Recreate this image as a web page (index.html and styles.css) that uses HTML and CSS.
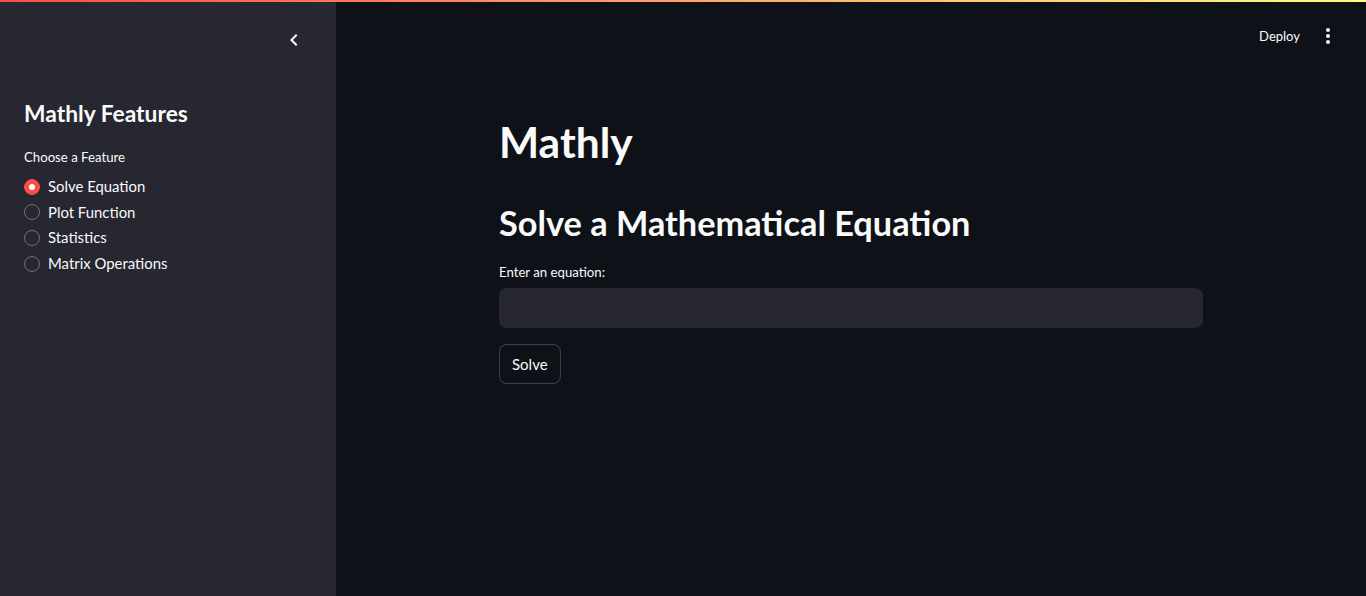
FILE: index.html
```html
<!DOCTYPE html>
<html lang="en">
<head>
<meta charset="utf-8">
<title>Mathly</title>
<link rel="stylesheet" href="styles.css">
</head>
<body>
<div class="decoration"></div>
<div class="app">
  <aside class="sidebar">
    <div class="sidebar-top">
      <button class="icon-btn" aria-label="Collapse sidebar">
        <svg width="24" height="24" viewBox="0 0 24 24"><path d="M15.41 7.41L14 6l-6 6 6 6 1.41-1.41L10.83 12z" fill="#fafafa"/></svg>
      </button>
    </div>
    <h2 class="side-title">Mathly Features</h2>
    <div class="radio-label">Choose a Feature</div>
    <div class="radio-group">
      <label class="radio checked"><span class="dot"></span><span>Solve Equation</span></label>
      <label class="radio"><span class="dot"></span><span>Plot Function</span></label>
      <label class="radio"><span class="dot"></span><span>Statistics</span></label>
      <label class="radio"><span class="dot"></span><span>Matrix Operations</span></label>
    </div>
  </aside>
  <main class="main">
    <header class="header">
      <span class="deploy">Deploy</span>
      <button class="icon-btn" aria-label="Menu">
        <svg width="24" height="24" viewBox="0 0 24 24"><path d="M12 8c1.1 0 2-.9 2-2s-.9-2-2-2-2 .9-2 2 .9 2 2 2zm0 2c-1.1 0-2 .9-2 2s.9 2 2 2 2-.9 2-2-.9-2-2-2zm0 6c-1.1 0-2 .9-2 2s.9 2 2 2 2-.9 2-2-.9-2-2-2z" fill="#fafafa"/></svg>
      </button>
    </header>
    <section class="block">
      <h1 class="title">Mathly</h1>
      <h2 class="subtitle">Solve a Mathematical Equation</h2>
      <label class="field-label">Enter an equation:</label>
      <div class="input"></div>
      <button class="btn">Solve</button>
    </section>
  </main>
</div>
</body>
</html>
```

FILE: styles.css
```css
* { box-sizing: border-box; }
html, body { margin: 0; padding: 0; }
body {
  background: #0e1117;
  color: #fafafa;
  font-family: "Lato", "Noto Sans", sans-serif;
  height: 596px;
  overflow: hidden;
}
.decoration {
  height: 2px;
  background: linear-gradient(90deg, #ff4b4b, #fffd80);
}
.app {
  display: flex;
  height: 594px;
}
.sidebar {
  width: 336px;
  flex: 0 0 336px;
  background: #262730;
  padding: 0 24px;
}
.sidebar-top {
  display: flex;
  justify-content: flex-end;
  padding-top: 26px;
  padding-right: 6px;
}
.icon-btn {
  border: 0;
  background: none;
  padding: 0;
  width: 24px;
  height: 24px;
  display: flex;
  align-items: center;
  justify-content: center;
}
.side-title {
  margin: 45px 0 0;
  font-size: 22.8px;
  line-height: 32px;
  font-weight: 700;
}
.radio-label {
  margin-top: 18px;
  font-size: 13.2px;
  line-height: 20px;
}
.radio-group {
  margin-top: 7px;
  display: flex;
  flex-direction: column;
}
.radio {
  display: flex;
  align-items: center;
  gap: 8px;
  font-size: 14.9px;
  line-height: 25.6px;
}
.dot {
  width: 16px;
  height: 16px;
  border-radius: 50%;
  border: 1px solid rgba(250, 250, 250, 0.35);
  display: flex;
  align-items: center;
  justify-content: center;
}
.radio.checked .dot {
  background: #ff4b4b;
  border-color: #ff4b4b;
}
.radio.checked .dot::after {
  content: "";
  width: 6px;
  height: 6px;
  border-radius: 50%;
  background: #fafafa;
}
.main {
  flex: 1;
  display: flex;
  flex-direction: column;
}
.header {
  height: 68px;
  display: flex;
  align-items: center;
  justify-content: flex-end;
  padding-right: 26px;
  gap: 16px;
}
.deploy {
  font-size: 13px;
}
.block {
  width: 704px;
  margin: 0 auto;
  padding-top: 46px;
  display: flex;
  flex-direction: column;
  align-items: flex-start;
}
.title {
  margin: 0;
  font-size: 42.5px;
  line-height: 52px;
  font-weight: 700;
}
.subtitle {
  margin: 33px 0 0;
  font-size: 34.3px;
  line-height: 44px;
  font-weight: 700;
}
.field-label {
  margin-top: 17px;
  font-size: 13.2px;
  line-height: 20px;
}
.input {
  margin-top: 6px;
  width: 100%;
  height: 40px;
  border-radius: 8px;
  background: #262730;
}
.btn {
  margin-top: 16px;
  height: 40px;
  padding: 0 12px;
  border-radius: 8px;
  border: 1px solid rgba(250, 250, 250, 0.2);
  background: #0e1117;
  color: #fafafa;
  font-family: inherit;
  font-size: 15px;
}
```
